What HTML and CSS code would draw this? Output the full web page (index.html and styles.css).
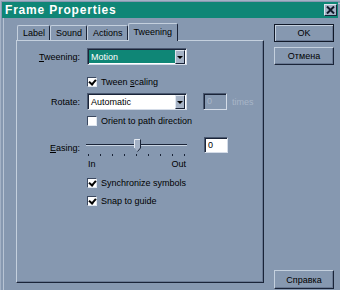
FILE: index.html
```html
<!DOCTYPE html>
<html lang="en">
<head>
    <meta charset="UTF-8">
    <title>Frame Properties</title>
    <link rel="stylesheet" href="styles.css">
</head>
<body>

<div class="window">
    <div class="titlebar">
        <span class="title">Frame Properties</span>
        <span class="close">
            <svg width="9" height="8" viewBox="0 0 9 8"><path d="M1 0.5 L8 7.5 M8 0.5 L1 7.5" stroke="#101828" stroke-width="2"/></svg>
        </span>
    </div>

    <div class="main">
        <div class="tabs-area">
            <div class="tabs">
                <div class="tab">Label</div>
                <div class="tab">Sound</div>
                <div class="tab">Actions</div>
                <div class="tab active">Tweening</div>
            </div>

            <div class="panel">
                <div class="row row-tween">
                    <span class="lbl"><u>T</u>weening:</span>
                    <div class="combo highlighted">
                        <span class="combo-text">Motion</span>
                        <span class="combo-btn"><span class="arrow"></span></span>
                    </div>
                </div>

                <div class="row row-check first-check">
                    <span class="lbl"></span>
                    <span class="check checked"></span>
                    <span>Tween <u>s</u>caling</span>
                </div>

                <div class="row row-rotate">
                    <span class="lbl">Rotate:</span>
                    <div class="combo">
                        <span class="combo-text">Automatic</span>
                        <span class="combo-btn"><span class="arrow"></span></span>
                    </div>
                    <span class="field disabled">0</span>
                    <span class="dim">times</span>
                </div>

                <div class="row row-check">
                    <span class="lbl"></span>
                    <span class="check"></span>
                    <span>Orient to path direction</span>
                </div>

                <div class="row row-easing">
                    <span class="lbl easing-lbl"><u>E</u>asing:</span>
                    <div class="slider">
                        <div class="slider-track">
                            <div class="track-line"></div>
                            <svg class="thumb" width="7" height="13" viewBox="0 0 7 13">
                                <path d="M0.5 0.5 H6.5 V9 L3.5 12.5 L0.5 9 Z" fill="#a4b2c6"/>
                                <path d="M0.5 9 V0.5 H6" fill="none" stroke="#e4eaf2"/>
                                <path d="M6.5 0.5 V9 L3.5 12.5" fill="none" stroke="#1a2438"/>
                            </svg>
                        </div>
                        <div class="ticks">
                            <i></i><i></i><i></i><i></i><i></i><i></i><i></i><i></i><i></i>
                        </div>
                        <div class="ends">
                            <span>In</span>
                            <span>Out</span>
                        </div>
                    </div>
                    <span class="field easing-field">0</span>
                </div>

                <div class="row row-check sync">
                    <span class="lbl"></span>
                    <span class="check checked"></span>
                    <span>Synchronize symbols</span>
                </div>

                <div class="row row-check snap">
                    <span class="lbl"></span>
                    <span class="check checked"></span>
                    <span>Snap to guide</span>
                </div>
            </div>
        </div>

        <div class="buttons">
            <button class="btn default">OK</button>
            <button class="btn">Отмена</button>
            <button class="btn help">Справка</button>
        </div>
    </div>
</div>

</body>
</html>
```

FILE: styles.css
```css
html, body {
    margin: 0;
    padding: 0;
}

body {
    width: 340px;
    height: 290px;
    overflow: hidden;
    background: #8698b0;
    font-family: 'Liberation Sans', Arial, sans-serif;
    font-size: 9px;
    color: #000;
}

.window {
    box-sizing: border-box;
    height: 290px;
    padding: 2px 2px 0 2px;
    border-top: 1px solid #a4b2c6;
    border-left: 1px solid #a4b2c6;
    box-shadow: inset 2px 2px 0 #8698b0, inset 3px 3px 0 #b8c4d4;
}

/* title bar */
.titlebar {
    height: 16px;
    margin-top: -1px;
    margin-left: -1px;
    background: #0f8676;
    display: flex;
    align-items: center;
    justify-content: space-between;
}

.title {
    padding-left: 3px;
    font-family: 'Liberation Sans', Arial, sans-serif;
    font-weight: bold;
    font-size: 12px;
    letter-spacing: 0.8px;
    color: #fff;
}

.close {
    width: 13px;
    height: 12px;
    margin-right: 1px;
    box-sizing: border-box;
    background: #a6b3c6;
    border-top: 1px solid #dfe6ef;
    border-left: 1px solid #dfe6ef;
    border-right: 1px solid #1a2438;
    border-bottom: 1px solid #1a2438;
    display: flex;
    align-items: center;
    justify-content: center;
}

/* main area */
.main {
    display: flex;
    padding-left: 13px;
}

.tabs-area {
    width: 248px;
}

.tabs {
    height: 22px;
    display: flex;
    align-items: flex-end;
    padding-left: 1px;
}

.tab {
    height: 15px;
    box-sizing: border-box;
    padding: 0 4px 0 5px;
    line-height: 14px;
    border-top: 1px solid #c4d0de;
    border-left: 1px solid #c4d0de;
    border-right: 1px solid #1a2438;
    border-radius: 2px 2px 0 0;
}

.tab.active {
    height: 18px;
    line-height: 16px;
    padding: 0 5px;
    margin-bottom: -1px;
    background: #8698b0;
    position: relative;
    z-index: 1;
}

.panel {
    box-sizing: border-box;
    height: 243px;
    padding-top: 7px;
    border-top: 1px solid #c4d0de;
    border-left: 1px solid #c4d0de;
    border-right: 1px solid #1a2438;
    border-bottom: 1px solid #1a2438;
    box-shadow: inset -1px -1px 0 #6a7a94;
}

.row {
    display: flex;
    align-items: center;
}

.lbl {
    width: 63px;
    margin-right: 7px;
    text-align: right;
    flex-shrink: 0;
}

.row-tween {
    height: 17px;
}

.row-check {
    height: 16px;
    margin-top: 3px;
}

.first-check {
    margin-top: 9px;
}

.row-rotate {
    height: 17px;
    margin-top: 3px;
}

.row-easing {
    align-items: flex-start;
    margin-top: 8px;
}

.easing-lbl {
    margin-top: 6px;
}

.sync {
    margin-top: 5px;
}

.snap {
    margin-top: 2px;
}

/* combo boxes and fields */
.combo {
    width: 100px;
    height: 17px;
    box-sizing: border-box;
    display: flex;
    background: #fff;
    border-top: 1px solid #4a5870;
    border-left: 1px solid #4a5870;
    border-right: 1px solid #d4dce8;
    border-bottom: 1px solid #d4dce8;
    box-shadow: inset 1px 1px 0 #1a2438;
    padding: 1px 1px 0 1px;
}

.combo-text {
    flex: 1;
    padding-left: 2px;
    line-height: 14px;
}

.combo.highlighted .combo-text {
    background: #0f8676;
    color: #fff;
    margin-bottom: 1px;
}

.combo-btn {
    width: 10px;
    box-sizing: border-box;
    background: #a6b3c6;
    border-top: 1px solid #dfe6ef;
    border-left: 1px solid #dfe6ef;
    border-right: 1px solid #1a2438;
    border-bottom: 1px solid #1a2438;
    display: flex;
    align-items: center;
    justify-content: center;
}

.arrow {
    width: 0;
    height: 0;
    border-left: 3px solid transparent;
    border-right: 3px solid transparent;
    border-top: 3px solid #000;
}

.field {
    box-sizing: border-box;
    width: 24px;
    height: 17px;
    padding-left: 3px;
    line-height: 14px;
    background: #fff;
    border-top: 1px solid #4a5870;
    border-left: 1px solid #4a5870;
    border-right: 1px solid #d4dce8;
    border-bottom: 1px solid #d4dce8;
    box-shadow: inset 1px 1px 0 #1a2438;
}

.field.disabled {
    margin-left: 16px;
    background: #8698b0;
    color: #a8b6c8;
}

.dim {
    margin-left: 5px;
    color: #a8b6c8;
}

.easing-field {
    height: 16px;
    margin-left: 17px;
}

/* checkboxes */
.check {
    width: 10px;
    height: 10px;
    box-sizing: border-box;
    margin-right: 4px;
    background: #fff;
    border-top: 1px solid #3a4860;
    border-left: 1px solid #3a4860;
    border-right: 1px solid #dfe6ef;
    border-bottom: 1px solid #dfe6ef;
    position: relative;
}

.check.checked::after {
    content: '';
    position: absolute;
    left: 1px;
    top: 0px;
    width: 3px;
    height: 5px;
    border-right: 2px solid #000;
    border-bottom: 2px solid #000;
    transform: translate(1px, 0) rotate(40deg);
}

/* slider */
.slider {
    width: 101px;
    margin-left: -1px;
}

.slider-track {
    height: 16px;
    position: relative;
}

.track-line {
    position: absolute;
    left: 0;
    right: 0;
    top: 7px;
    height: 1px;
    background: #1a2438;
    border-bottom: 1px solid #c8d4e2;
}

.thumb {
    position: absolute;
    left: 48px;
    top: 2px;
}

.ticks {
    display: flex;
    justify-content: space-between;
    padding: 0 2px;
    margin-top: 1px;
}

.ticks i {
    width: 1px;
    height: 2px;
    background: #1a2438;
}

.ends {
    display: flex;
    justify-content: space-between;
    padding: 0 1px 0 2px;
    margin-top: 3px;
    line-height: 11px;
}

/* buttons */
.buttons {
    width: 60px;
    margin-left: 10px;
    height: 265px;
    padding-top: 6px;
    display: flex;
    flex-direction: column;
}

.btn {
    height: 18px;
    box-sizing: border-box;
    padding: 0;
    font-family: 'Liberation Sans', Arial, sans-serif;
    font-size: 9px;
    color: #000;
    background: #8698b0;
    border-top: 1px solid #c4d0de;
    border-left: 1px solid #c4d0de;
    border-right: 1px solid #1a2438;
    border-bottom: 1px solid #1a2438;
    box-shadow: inset -1px -1px 0 #6a7a94;
}

.btn.default {
    border: 1px solid #101828;
    box-shadow: inset 1px 1px 0 #c4d0de, inset -1px -1px 0 #6a7a94;
}

.btn + .btn {
    margin-top: 5px;
}

.btn.help {
    height: 19px;
    margin-top: auto;
}
```
